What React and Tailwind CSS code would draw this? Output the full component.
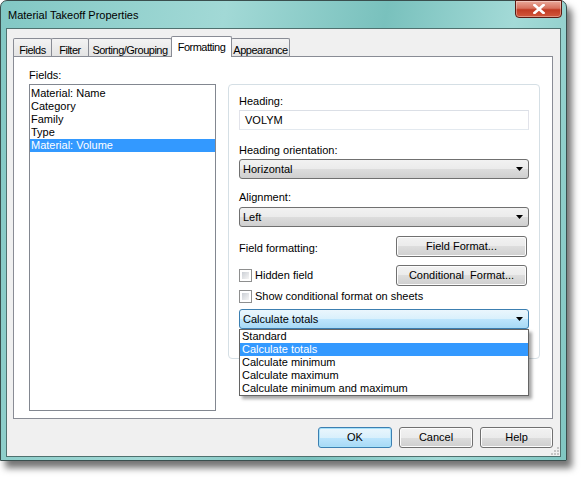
import React from "react";

const font = { fontFamily: '"Liberation Sans", Arial, sans-serif' };

const Arrow = () => (
  <svg width="7" height="4" viewBox="0 0 7 4" className="shrink-0">
    <path d="M0 0 H7 L3.5 4 Z" fill="#000" />
  </svg>
);

const Combo = ({ value, focused }) => (
  <div
    className={`h-[20px] w-full flex items-center justify-between pl-[3px] pr-[5px] rounded-[3px] border text-[11px] text-black ${
      focused
        ? "border-[#3c7fb1] bg-[linear-gradient(#eaf6fd_0%,#d9f0fc_50%,#bee6fd_50%,#a7d9f5_100%)]"
        : "border-[#707070] bg-[linear-gradient(#f2f2f2_0%,#ebebeb_50%,#dddddd_50%,#cfcfcf_100%)]"
    }`}
  >
    <span>{value}</span>
    <Arrow />
  </div>
);

const Button = ({ children, className = "", primary }) => (
  <div
    className={`flex items-center justify-center rounded-[3px] border text-[11px] text-black ${
      primary
        ? "border-[#3c7fb1] bg-[linear-gradient(#eaf6fd_0%,#d9f0fc_50%,#bee6fd_50%,#a7d9f5_100%)] shadow-[inset_0_0_0_1px_#a6e1fa]"
        : "border-[#707070] bg-[linear-gradient(#f2f2f2_0%,#ebebeb_50%,#dddddd_50%,#cfcfcf_100%)] shadow-[inset_0_0_0_1px_#fcfcfc]"
    } ${className}`}
  >
    {children}
  </div>
);

const Checkbox = () => (
  <div className="w-[13px] h-[13px] border border-[#8e8f8f] bg-white p-[2px] shrink-0">
    <div className="w-full h-full bg-[linear-gradient(135deg,#cbcfd5,#f6f6f6)]" />
  </div>
);

const tabs = [
  { label: "Fields", w: "w-[39px]" },
  { label: "Filter", w: "w-[38px]" },
  { label: "Sorting/Grouping", w: "w-[84px]" },
  { label: "Formatting", w: "w-[61px]", active: true },
  { label: "Appearance", w: "w-[59px]" },
];

const fields = ["Material: Name", "Category", "Family", "Type", "Material: Volume"];
const calcOptions = [
  "Standard",
  "Calculate totals",
  "Calculate minimum",
  "Calculate maximum",
  "Calculate minimum and maximum",
];

export default function App() {
  return (
    <div className="w-[583px] h-[479px] bg-white overflow-hidden" style={font}>
      <div className="w-[567px] h-[461px] flex flex-col border border-[#3a4f4e] rounded-t-[7px] bg-[linear-gradient(100deg,#82c8c4_0%,#a2d9d6_35%,#79c1bd_60%,#a3dad7_80%,#80c6c2_100%)] shadow-[5px_7px_7px_rgba(0,0,0,0.55)]">
        {/* Title bar */}
        <div className="h-[27px] flex items-start shrink-0">
          <span className="pl-[7px] pt-[7px] text-[11px] leading-[14px] text-black">
            Material Takeoff Properties
          </span>
          <div className="ml-auto mr-[4px] w-[47px] h-[18px] -mt-px rounded-b-[4px] border border-[#5a1a12] bg-[linear-gradient(#e9a999_0%,#d7735f_45%,#c13b23_55%,#d2583c_100%)] flex items-center justify-center shadow-[inset_0_0_0_1px_rgba(255,255,255,0.35)]">
            <svg width="12" height="10" viewBox="0 0 12 10">
              <path d="M1.5 1 L10.5 9 M10.5 1 L1.5 9" stroke="#fff" strokeWidth="2.6" strokeLinecap="square" />
            </svg>
          </div>
        </div>

        {/* Client area */}
        <div className="mx-[5px] h-[429px] border border-[#4f716f] bg-[#f0f0f0] flex flex-col pl-[6px] pr-[7px] pt-[7px] relative">
          {/* Tabs */}
          <div className="h-[20px] flex items-end shrink-0">
            {tabs.map((t, i) => (
              <div
                key={t.label}
                className={`${t.w} ${i > 0 ? "-ml-px" : ""} flex justify-center whitespace-nowrap tracking-[-0.5px] border border-b-0 border-[#898c95] text-[11px] text-black ${
                  t.active
                    ? "h-[21px] -mb-px relative z-10 bg-white pt-[2px] rounded-t-[2px]"
                    : "h-[18px] pt-[3px] bg-[linear-gradient(#f3f3f3,#e4e4e4)] rounded-t-[2px]"
                }`}
              >
                {t.label}
              </div>
            ))}
          </div>

          {/* Panel */}
          <div className="h-[363px] border border-[#898c95] bg-white flex pl-[15px] pt-[12px]">
            <div className="flex flex-col w-[187px]">
              <div className="h-[13px] leading-[13px] text-[11px] text-black">Fields:</div>
              <div className="mt-[2px] h-[327px] border border-[#828790] bg-white pt-[2px] text-[11px] text-black">
                {fields.map((f) => (
                  <div
                    key={f}
                    className={`h-[13px] leading-[13px] pl-[1px] ${
                      f === "Material: Volume" ? "bg-[#3399ff] text-white" : ""
                    }`}
                  >
                    {f}
                  </div>
                ))}
              </div>
            </div>

            <div className="ml-[12px] mt-[15px] w-[312px] h-[275px] border border-[#d5dfe5] rounded-[4px] px-[10px] pt-[10px] flex flex-col text-[11px] text-black">
              <div className="h-[13px] leading-[13px]">Heading:</div>
              <div className="mt-[2px] h-[20px] border border-[#abadb3] border-t-[#dbdfe6] border-l-[#e2e3ea] border-r-[#e2e3ea] border-b-[#e3e9ef] flex items-center pl-[5px]">
                VOLYM
              </div>
              <div className="mt-[14px] h-[13px] leading-[13px]">Heading orientation:</div>
              <div className="mt-[2px]">
                <Combo value="Horizontal" />
              </div>
              <div className="mt-[12px] h-[13px] leading-[13px]">Alignment:</div>
              <div className="mt-[3px]">
                <Combo value="Left" />
              </div>
              <div className="mt-[9px] h-[21px] flex items-center justify-between pr-[2px]">
                <span className="pt-[4px]">Field formatting:</span>
                <Button className="w-[131px] h-[21px]">Field Format...</Button>
              </div>
              <div className="mt-[8px] h-[21px] flex items-start justify-between pr-[2px]">
                <div className="flex items-center gap-[3px] mt-[2px]">
                  <Checkbox />
                  <span>Hidden field</span>
                </div>
                <Button className="w-[131px] h-[21px]">Conditional&nbsp; Format...</Button>
              </div>
              <div className="mt-[4px] h-[13px] flex items-center gap-[3px]">
                <Checkbox />
                <span>Show conditional format on sheets</span>
              </div>
              <div className="mt-[6px] relative z-20">
                <Combo value="Calculate totals" focused />
                <div className="absolute left-0 top-full w-[290px] border border-[#646464] bg-white shadow-[3px_3px_3px_rgba(0,0,0,0.35)]">
                  {calcOptions.map((o) => (
                    <div
                      key={o}
                      className={`h-[13px] leading-[13px] pl-[2px] ${
                        o === "Calculate totals" ? "bg-[#3399ff] text-white" : ""
                      }`}
                    >
                      {o}
                    </div>
                  ))}
                </div>
              </div>
            </div>
          </div>

          {/* Buttons */}
          <div className="mt-[8px] flex justify-end gap-[7px]">
            <Button primary className="w-[74px] h-[21px]">OK</Button>
            <Button className="w-[74px] h-[21px]">Cancel</Button>
            <Button className="w-[73px] h-[21px]">Help</Button>
          </div>

          {/* Size grip */}
          <svg className="absolute right-[1px] bottom-[1px]" width="8" height="8" viewBox="0 0 8 8">
            {[
              [6, 0], [6, 3], [3, 3], [6, 6], [3, 6], [0, 6],
            ].map(([x, y]) => (
              <rect key={`${x}-${y}`} x={x} y={y} width="2" height="2" fill="#c5c5c5" />
            ))}
          </svg>
        </div>
      </div>
    </div>
  );
}
